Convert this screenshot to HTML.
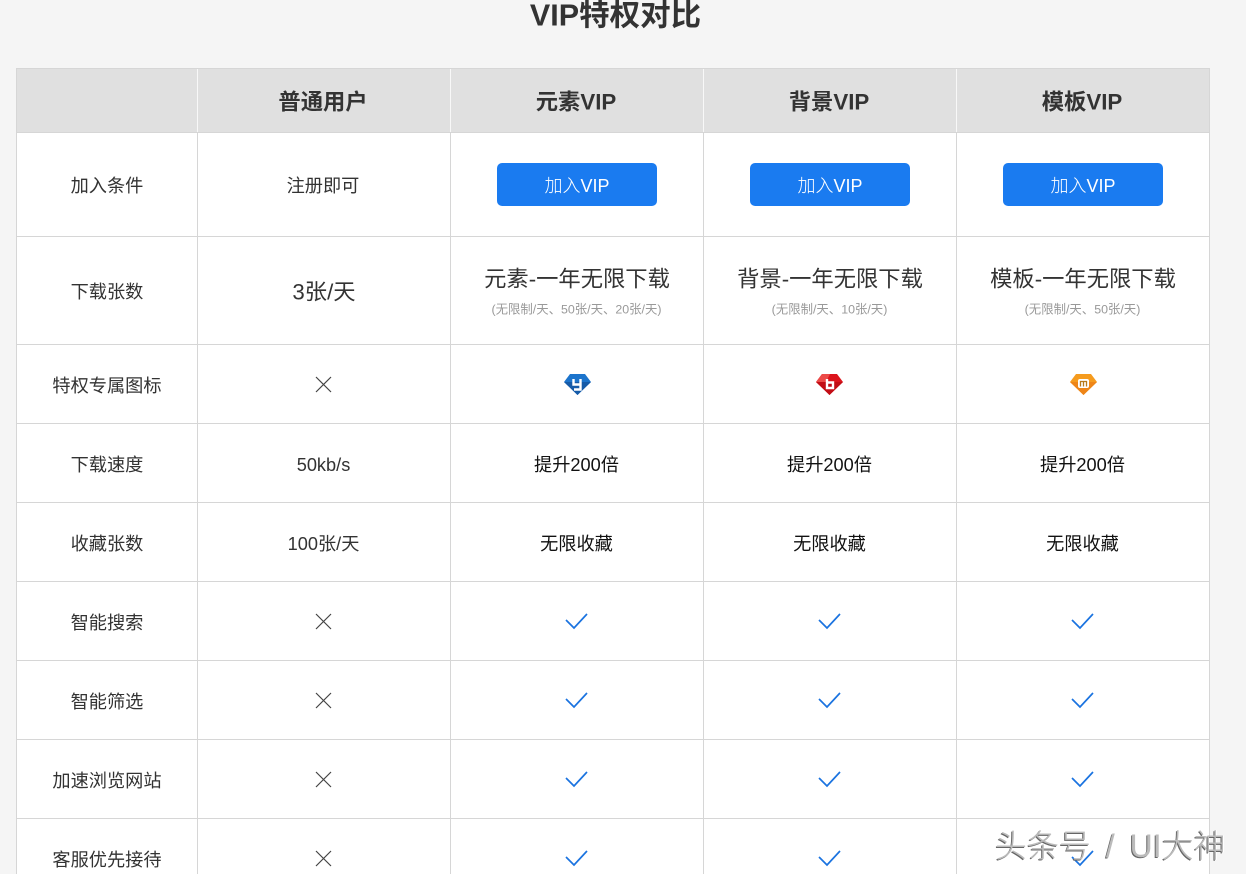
<!DOCTYPE html>
<html lang="zh"><head><meta charset="utf-8"><title>VIP特权对比</title>
<style>
html,body{margin:0;padding:0}
body{width:1246px;height:874px;overflow:hidden;position:relative;background:#f5f5f5;font-family:"Liberation Sans","Noto Sans CJK SC",sans-serif;color:#333}
#w{position:absolute;left:16px;top:68px;width:1194px;height:806px;background:#fff}
#h{position:absolute;left:16px;top:68px;width:1194px;height:65px;background:#e0e0e0}
.v,.l{position:absolute;background:#d6d6d6}
.v{width:1px;top:133px;height:741px}
.l{left:16px;width:1194px;height:1px}
.hv{position:absolute;width:1px;top:68px;height:65px;background:#f8f8f8}
.t{position:absolute;transform:translate(-50%,-50%);margin-top:2px;white-space:nowrap;text-align:center;line-height:1.2;font-size:18.2px;font-weight:400}
.th{font-size:22.3px;font-weight:700;color:#333;margin-top:1px}
.big{font-size:22.3px}
.sm{font-size:12.4px;color:#999}
.k{color:#111}
.btn{position:absolute;top:163px;width:160px;height:43px;background:#1a7bf0;border-radius:5px;color:#fff;font-size:18px;font-weight:300;line-height:46px;text-align:center}
svg{position:absolute}
#wm{position:absolute;left:995px;top:826px;font-size:32px;line-height:40px;font-weight:300;color:#bbb;white-space:nowrap;word-spacing:6px;text-shadow:-1px 1px 0 #666,1px 0 0 #fff}
</style></head><body>
<div id="w"></div><div id="h"></div>
<div class="hv" style="left:197px"></div><div class="hv" style="left:450px"></div><div class="hv" style="left:703px"></div><div class="hv" style="left:956px"></div>
<div class="v" style="left:16px;top:68px;height:806px"></div><div class="v" style="left:197px"></div><div class="v" style="left:450px"></div><div class="v" style="left:703px"></div><div class="v" style="left:956px"></div><div class="v" style="left:1209px;top:68px;height:806px"></div>
<div class="l" style="top:68px"></div><div class="l" style="top:132px"></div><div class="l" style="top:236px"></div><div class="l" style="top:344px"></div><div class="l" style="top:423px"></div><div class="l" style="top:502px"></div><div class="l" style="top:581px"></div><div class="l" style="top:660px"></div><div class="l" style="top:739px"></div><div class="l" style="top:818px"></div>

<div class="t" style="left:615.5px;top:14px;font-size:30.5px;font-weight:700">VIP特权对比</div>
<div class="t th" style="left:323px;top:102px">普通用户</div>
<div class="t th" style="left:576px;top:102px">元素VIP</div>
<div class="t th" style="left:829px;top:102px">背景VIP</div>
<div class="t th" style="left:1082px;top:102px">模板VIP</div>

<div class="t" style="left:107px;top:185px">加入条件</div>
<div class="t" style="left:107px;top:291px">下载张数</div>
<div class="t" style="left:107px;top:385px">特权专属图标</div>
<div class="t" style="left:107px;top:464px">下载速度</div>
<div class="t" style="left:107px;top:543px">收藏张数</div>
<div class="t" style="left:107px;top:622px">智能搜索</div>
<div class="t" style="left:107px;top:701px">智能筛选</div>
<div class="t" style="left:107px;top:780px">加速浏览网站</div>
<div class="t" style="left:107px;top:859px">客服优先接待</div>

<div class="t" style="left:323px;top:185px">注册即可</div>
<div class="btn" style="left:497px">加入VIP</div><div class="btn" style="left:750px">加入VIP</div><div class="btn" style="left:1003px">加入VIP</div>

<div class="t big" style="left:324px;top:291px">3张/天</div>
<div class="t big" style="left:577px;top:278px">元素-一年无限下载</div>
<div class="t big" style="left:830px;top:278px">背景-一年无限下载</div>
<div class="t big" style="left:1083px;top:278px">模板-一年无限下载</div>
<div class="t sm" style="left:576.5px;top:308px">(无限制/天、50张/天、20张/天)</div>
<div class="t sm" style="left:829.5px;top:308px">(无限制/天、10张/天)</div>
<div class="t sm" style="left:1082.5px;top:308px">(无限制/天、50张/天)</div>

<svg style="left:564px;top:374px" width="28" height="21" viewBox="0 0 28 21"><path d="M6 0H21L27 8L13.5 21L0 8Z" fill="#1c74cc"/><path d="M0 8H27L13.5 21Z" fill="#165ba8"/><path d="M9.5 5V10.5H16.5M16.5 5V15.5H10" fill="none" stroke="#fff" stroke-width="2.4"/></svg>
<svg style="left:816px;top:374px" width="28" height="21" viewBox="0 0 28 21"><path d="M6 0H21L27 8L13.5 21L0 8Z" fill="#dc141c"/><path d="M0 8H27L13.5 21Z" fill="#c20e16"/><path d="M6 0H14L10 8H0Z" fill="#ec4a48"/><path d="M11 5V14H17V8.5H11" fill="none" stroke="#fff" stroke-width="2.4"/></svg>
<svg style="left:1070px;top:374px" width="28" height="21" viewBox="0 0 28 21"><path d="M6 0H21L27 8L13.5 21L0 8Z" fill="#f59b1e"/><path d="M0 8H27L13.5 21Z" fill="#ee8518"/><rect x="8" y="5" width="11" height="9" rx="2" fill="#fff"/><path d="M10.5 12.5V7.5H16.5V12.5M13.5 7.5V12.5" fill="none" stroke="#b87a1c" stroke-width="1.3"/></svg>

<div class="t" style="left:323.5px;top:464px">50kb/s</div>
<div class="t k" style="left:576.5px;top:464px">提升200倍</div><div class="t k" style="left:829.5px;top:464px">提升200倍</div><div class="t k" style="left:1082.5px;top:464px">提升200倍</div>
<div class="t" style="left:323.5px;top:543px">100张/天</div>
<div class="t k" style="left:576.5px;top:543px">无限收藏</div><div class="t k" style="left:829.5px;top:543px">无限收藏</div><div class="t k" style="left:1082.5px;top:543px">无限收藏</div>

<svg style="left:0;top:0" width="1246" height="874" fill="none">
<g stroke="#444" stroke-width="1.2"><path d="M316 377L331 392M331 377L316 392"/><path d="M316 614L331 629M331 614L316 629"/><path d="M316 693L331 708M331 693L316 708"/><path d="M316 772L331 787M331 772L316 787"/><path d="M316 851L331 866M331 851L316 866"/></g>
<g stroke="#1a73e0" stroke-width="1.7"><path d="M566 620L574 628L587 614"/><path d="M819 620L827 628L840 614"/><path d="M1072 620L1080 628L1093 614"/><path d="M566 699L574 707L587 693"/><path d="M819 699L827 707L840 693"/><path d="M1072 699L1080 707L1093 693"/><path d="M566 778L574 786L587 772"/><path d="M819 778L827 786L840 772"/><path d="M1072 778L1080 786L1093 772"/><path d="M566 857L574 865L587 851"/><path d="M819 857L827 865L840 851"/><path d="M1072 857L1080 865L1093 851"/></g>
</svg>
<div id="wm">头条号 / UI大神</div>
</body></html>
